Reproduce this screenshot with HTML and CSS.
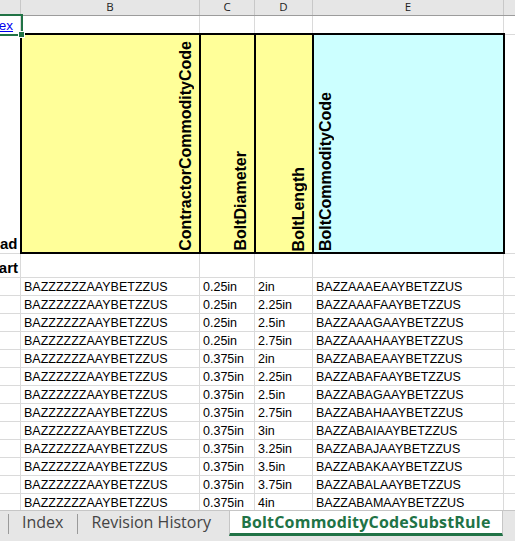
FILE: index.html
```html
<!DOCTYPE html>
<html lang="en">
<head>
    <meta charset="UTF-8">
    <meta name="viewport" content="width=device-width, initial-scale=1.0">
    <title>BoltCommodityCodeSubstRule</title>
    <link rel="stylesheet" href="styles.css">
</head>
<body>
<div class="sheet">
    <table class="grid">
        <colgroup>
            <col class="col-a"><col class="col-b"><col class="col-c"><col class="col-d"><col class="col-e"><col class="col-f">
        </colgroup>
        <thead>
            <tr class="letters"><th></th><th>B</th><th>C</th><th>D</th><th>E</th><th></th></tr>
        </thead>
        <tbody>
            <tr class="r1">
                <td class="active"><a href="#">Index</a><span class="sel"></span></td>
                <td></td><td></td><td></td><td></td><td></td>
            </tr>
            <tr class="r2">
                <td class="lbl">Head</td>
                <td class="hd"><div class="vert"><span>ContractorCommodityCode</span></div></td>
                <td class="hd"><div class="vert"><span>BoltDiameter</span></div></td>
                <td class="hd"><div class="vert"><span>BoltLength</span></div></td>
                <td class="hd cyan left"><div class="vert"><span>BoltCommodityCode</span></div></td>
                <td></td>
            </tr>
            <tr class="r3"><td class="lbl">Start</td><td></td><td></td><td></td><td></td><td></td></tr>
            <tr><td></td><td>BAZZZZZZAAYBETZZUS</td><td>0.25in</td><td>2in</td><td>BAZZAAAEAAYBETZZUS</td><td></td></tr>
            <tr><td></td><td>BAZZZZZZAAYBETZZUS</td><td>0.25in</td><td>2.25in</td><td>BAZZAAAFAAYBETZZUS</td><td></td></tr>
            <tr><td></td><td>BAZZZZZZAAYBETZZUS</td><td>0.25in</td><td>2.5in</td><td>BAZZAAAGAAYBETZZUS</td><td></td></tr>
            <tr><td></td><td>BAZZZZZZAAYBETZZUS</td><td>0.25in</td><td>2.75in</td><td>BAZZAAAHAAYBETZZUS</td><td></td></tr>
            <tr><td></td><td>BAZZZZZZAAYBETZZUS</td><td>0.375in</td><td>2in</td><td>BAZZABAEAAYBETZZUS</td><td></td></tr>
            <tr><td></td><td>BAZZZZZZAAYBETZZUS</td><td>0.375in</td><td>2.25in</td><td>BAZZABAFAAYBETZZUS</td><td></td></tr>
            <tr><td></td><td>BAZZZZZZAAYBETZZUS</td><td>0.375in</td><td>2.5in</td><td>BAZZABAGAAYBETZZUS</td><td></td></tr>
            <tr><td></td><td>BAZZZZZZAAYBETZZUS</td><td>0.375in</td><td>2.75in</td><td>BAZZABAHAAYBETZZUS</td><td></td></tr>
            <tr><td></td><td>BAZZZZZZAAYBETZZUS</td><td>0.375in</td><td>3in</td><td>BAZZABAIAAYBETZZUS</td><td></td></tr>
            <tr><td></td><td>BAZZZZZZAAYBETZZUS</td><td>0.375in</td><td>3.25in</td><td>BAZZABAJAAYBETZZUS</td><td></td></tr>
            <tr><td></td><td>BAZZZZZZAAYBETZZUS</td><td>0.375in</td><td>3.5in</td><td>BAZZABAKAAYBETZZUS</td><td></td></tr>
            <tr><td></td><td>BAZZZZZZAAYBETZZUS</td><td>0.375in</td><td>3.75in</td><td>BAZZABALAAYBETZZUS</td><td></td></tr>
            <tr><td></td><td>BAZZZZZZAAYBETZZUS</td><td>0.375in</td><td>4in</td><td>BAZZABAMAAYBETZZUS</td><td></td></tr>
        </tbody>
    </table>
</div>
<div class="tabs">
    <div class="tab">Index</div>
    <div class="tab">Revision History</div>
    <div class="tab active">BoltCommodityCodeSubstRule</div>
</div>
</body>
</html>
```

FILE: styles.css
```css
html, body {
    margin: 0;
    height: 100%;
}
body {
    display: flex;
    flex-direction: column;
    overflow: hidden;
    background-color: #fff;
    font-family: "Liberation Sans", Arial, sans-serif;
}
.sheet {
    flex: 1;
    overflow: hidden;
}

/* grid, scrolled so only the tail of column A shows */
.grid {
    border-collapse: collapse;
    table-layout: fixed;
    width: 587px;
    margin-left: -24px;
}
.col-a { width: 44px; }
.col-b { width: 179px; }
.col-c { width: 55px; }
.col-d { width: 58px; }
.col-e { width: 191px; }
.col-f { width: 60px; }

.grid th,
.grid td {
    border: 1px solid #dadada;
    padding: 0 3px;
    white-space: nowrap;
    overflow: hidden;
    vertical-align: bottom;
    font-size: 12.5px;
    line-height: 15px;
    color: #000;
    text-align: left;
}
.grid tr { height: 18px; }

.grid .letters { height: 15px; }
.grid .letters th {
    border-top: none;
    border-color: #c8c8c8 #c8c8c8 #9c9c9c;
    background-color: #e6e6e6;
    padding: 0;
    vertical-align: middle;
    text-align: center;
    font: normal 11.5px/14px "Open Sans", sans-serif;
    color: #222;
}

.grid .r1 { height: 19px; }
.grid .r2 { height: 219px; }
.grid .r3 { height: 24px; }

.grid .active {
    position: relative;
    overflow: visible;
}
.active a {
    color: #0000ee;
    font-size: 13.5px;
}
.sel {
    position: absolute;
    left: -2px;
    top: -2px;
    right: -3px;
    bottom: -2px;
    border: 2px solid #217346;
}
.sel::after {
    content: "";
    position: absolute;
    right: -4px;
    bottom: -4px;
    width: 5px;
    height: 5px;
    background-color: #217346;
    border: 1px solid #fff;
}

.grid .lbl {
    text-align: right;
    padding: 0 2px 2px 0;
    font-weight: bold;
    font-size: 15px;
}

/* rotated column titles */
.grid .hd {
    background-color: #ffff99;
    border: 2px solid #000;
    padding: 0 4px 1px 3px;
}
.grid .hd.cyan {
    background-color: #ccffff;
}
.vert {
    display: flex;
    justify-content: flex-end;
}
.hd.left .vert {
    justify-content: flex-start;
}
.vert span {
    writing-mode: vertical-rl;
    transform: rotate(180deg);
    font: bold 16px/18px "Liberation Sans", Arial, sans-serif;
}

/* sheet tabs */
.tabs {
    flex: none;
    height: 30px;
    display: flex;
    align-items: flex-start;
    padding-left: 8px;
    background-color: #e6e6e6;
    border-top: 1px solid #c6c6c6;
    font: 16px/22px "Open Sans", sans-serif;
    color: #444;
}
.tab {
    position: relative;
    padding: 0 14px;
}
.tab::before {
    content: "";
    position: absolute;
    left: 0;
    top: 3px;
    width: 1px;
    height: 20px;
    background-color: #9a9a9a;
}
.tab.active {
    margin-left: 4px;
    padding: 0 11px;
    background-color: #fff;
    color: #217346;
    font-weight: bold;
    letter-spacing: 0.2px;
    border-left: 1px solid #c6c6c6;
    border-right: 1px solid #c6c6c6;
    border-bottom: 3px solid #217346;
}
.tab.active::before {
    display: none;
}
```
